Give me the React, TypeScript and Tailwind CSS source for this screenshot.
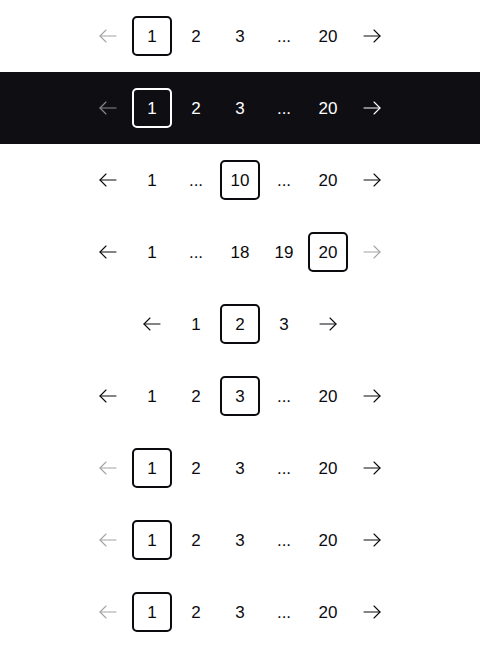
type Item = number | '...' | 'prev' | 'next';

interface RowProps {
  items: (number | '...')[];
  current: number;
  prevDisabled?: boolean;
  nextDisabled?: boolean;
  dark?: boolean;
}

function Arrow({ dir }: { dir: 'left' | 'right' }) {
  return (
    <svg width="18" height="14" viewBox="0 0 18 14" fill="none" stroke="currentColor" strokeWidth="1.1" strokeLinecap="round" strokeLinejoin="round">
      {dir === 'right' ? (
        <>
          <path d="M1 7h16" />
          <path d="M11 1l6 6-6 6" />
        </>
      ) : (
        <>
          <path d="M17 7H1" />
          <path d="M7 1L1 7l6 6" />
        </>
      )}
    </svg>
  );
}

function PaginationRow({ items, current, prevDisabled, nextDisabled, dark }: RowProps) {
  const all: Item[] = ['prev', ...items, 'next'];
  const text = dark ? 'text-white' : 'text-[#0b0b0f]';
  const muted = dark ? 'text-[#8a8a90]' : 'text-[#a3a3a3]';
  const ring = dark ? 'border-white' : 'border-[#0b0b0f]';

  return (
    <div className={`h-[72px] flex items-center justify-center ${dark ? 'bg-[#0e0e13]' : 'bg-white'}`}>
      <div className="flex items-center gap-1">
        {all.map((it, i) => {
          if (it === 'prev' || it === 'next') {
            const disabled = it === 'prev' ? prevDisabled : nextDisabled;
            return (
              <div key={i} className={`w-10 h-10 flex items-center justify-center ${disabled ? muted : text}`}>
                <Arrow dir={it === 'prev' ? 'left' : 'right'} />
              </div>
            );
          }
          const active = it === current;
          return (
            <div
              key={i}
              className={`w-10 h-10 flex items-center justify-center pt-[2px] rounded-[5px] text-[17px] ${text} ${
                active ? `border-2 ${ring}` : ''
              }`}
            >
              {it}
            </div>
          );
        })}
      </div>
    </div>
  );
}

export default function App() {
  return (
    <div className="w-[480px] bg-white" style={{ fontFamily: '"Liberation Sans", Arial, sans-serif' }}>
      <PaginationRow items={[1, 2, 3, '...', 20]} current={1} prevDisabled />
      <PaginationRow items={[1, 2, 3, '...', 20]} current={1} prevDisabled dark />
      <PaginationRow items={[1, '...', 10, '...', 20]} current={10} />
      <PaginationRow items={[1, '...', 18, 19, 20]} current={20} nextDisabled />
      <PaginationRow items={[1, 2, 3]} current={2} />
      <PaginationRow items={[1, 2, 3, '...', 20]} current={3} />
      <PaginationRow items={[1, 2, 3, '...', 20]} current={1} prevDisabled />
      <PaginationRow items={[1, 2, 3, '...', 20]} current={1} prevDisabled />
      <PaginationRow items={[1, 2, 3, '...', 20]} current={1} prevDisabled />
    </div>
  );
}
